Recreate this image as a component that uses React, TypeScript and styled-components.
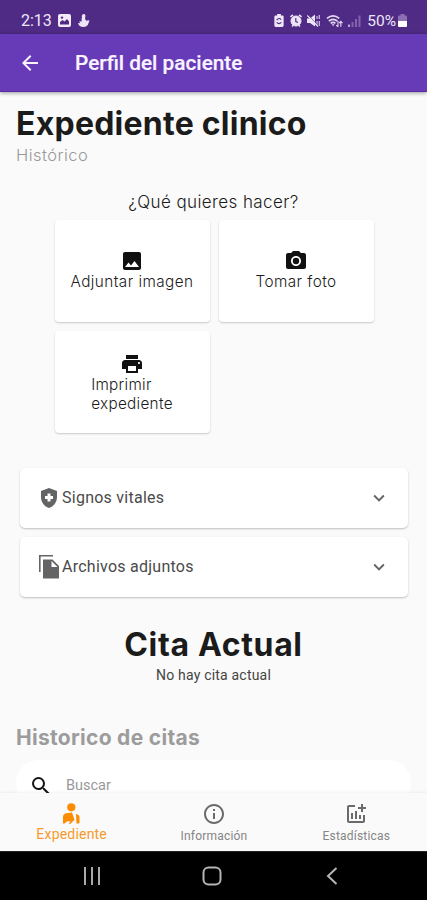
import React from "react";
import styled, { createGlobalStyle } from "styled-components";
import {
  MdAddchart,
  MdArrowBack,
  MdCameraAlt,
  MdExpandMore,
  MdHealthAndSafety,
  MdImage,
  MdInfoOutline,
  MdPrint,
  MdSearch,
} from "react-icons/md";

const GlobalStyle = createGlobalStyle`
  * { box-sizing: border-box; }
  body { margin: 0; background: #fafafa; }
  svg { display: block; flex: none; }
`;

const geometric = `Inter, "Open Sans", sans-serif`;
const roboto = `Roboto, "Liberation Sans", sans-serif`;

const Screen = styled.div`
  width: 427px;
  height: 900px;
  display: flex;
  flex-direction: column;
  overflow: hidden;
  background: #fafafa;
  color: #1b1b1b;
  font-family: ${roboto};
`;

const StatusBar = styled.div`
  height: 34px;
  flex: none;
  padding: 7px 20px 0 21px;
  display: flex;
  justify-content: space-between;
  background: #4f2b86;
  color: #eee6f8;
  font-size: 16px;
`;

const StatusGroup = styled.div<{ $gap: number }>`
  height: 27px;
  display: flex;
  align-items: center;
  gap: ${(p) => p.$gap}px;
`;

const BatteryText = styled.span`
  font-size: 15.5px;
`;

const AppBar = styled.header`
  height: 58px;
  flex: none;
  display: flex;
  align-items: center;
  padding: 0 18px 0 18px;
  gap: 33px;
  background: #673ab7;
  border-bottom: 1px solid #5a2ba5;
  box-shadow: 0 1px 4px rgba(0, 0, 0, 0.4);
  color: #f8f3ff;
  z-index: 1;
`;

const BarTitle = styled.h1`
  margin: 0;
  padding-top: 1px;
  font-size: 20.8px;
  font-weight: 500;
  line-height: 24px;
  -webkit-text-stroke: 0.2px currentColor;
`;

const Content = styled.main`
  flex: 1;
  min-height: 0;
  overflow: hidden;
  display: flex;
  flex-direction: column;
`;

const Text = styled.div<{
  $size: number;
  $line: number;
  $weight?: number;
  $color?: string;
  $spacing?: number;
  $font?: string;
}>`
  margin: 0;
  font-family: ${(p) => p.$font ?? geometric};
  font-size: ${(p) => p.$size}px;
  line-height: ${(p) => p.$line}px;
  font-weight: ${(p) => p.$weight ?? 400};
  color: ${(p) => p.$color ?? "#1b1b1b"};
  letter-spacing: ${(p) => p.$spacing ?? 0}px;
  white-space: pre-line;
`;

const Heading = styled.section`
  height: 98px;
  flex: none;
  padding: 12px 16px 0;
`;

const Question = styled.div`
  height: 28px;
  flex: none;
  display: flex;
  justify-content: center;
`;

const ActionGrid = styled.div`
  display: grid;
  flex: none;
  grid-template-columns: 155px 155px;
  grid-auto-rows: 102px;
  gap: 9px;
  padding: 2px 0 0 54.5px;
`;

const ActionCard = styled.button<{ $tall?: boolean }>`
  border: 0;
  padding: ${(p) => (p.$tall ? "1px 0 0" : "0 0 3px")};
  display: flex;
  flex-direction: column;
  align-items: center;
  justify-content: center;
  text-align: left;
  background: #fff;
  border-radius: 4px;
  box-shadow: 0 1px 2px rgba(0, 0, 0, 0.2);
  color: #111;
`;

const ActionLabel = styled(Text)`
  margin-top: -1px;
`;

const Panels = styled.div`
  flex: none;
  display: grid;
  grid-auto-rows: 60px;
  gap: 9px;
  padding: 35px 19px 0 20px;
`;

const Panel = styled.div`
  display: flex;
  align-items: center;
  padding: 0 18px 1px 16px;
  background: #fff;
  border-radius: 5px;
  box-shadow: 0 1px 2px rgba(0, 0, 0, 0.24);
  color: #646464;
`;

const PanelIcon = styled.span`
  width: 26px;
  display: flex;
  justify-content: center;
`;

const PanelLabel = styled.span`
  flex: 1;
  font-size: 16px;
  letter-spacing: 0.25px;
  color: #4a4a4a;
`;

const Current = styled.section`
  flex: none;
  height: 123px;
  padding-top: 28px;
  display: flex;
  flex-direction: column;
  align-items: center;
`;

const History = styled.section`
  flex: none;
  padding: 4px 16px 0;
`;

const SearchBox = styled.div`
  height: 46px;
  margin-top: 8px;
  padding: 5px 12px 0 13px;
  display: flex;
  align-items: center;
  gap: 13px;
  background: #fff;
  border-radius: 23px;
  color: #151515;
`;

const TabBar = styled.nav`
  height: 58px;
  flex: none;
  display: grid;
  grid-template-columns: repeat(3, 1fr);
  background: #fafafa;
  box-shadow: 0 -1px 3px rgba(0, 0, 0, 0.05);
  z-index: 1;
`;

const Tab = styled.div<{ $active?: boolean }>`
  display: flex;
  flex-direction: column;
  align-items: center;
  padding: ${(p) => (p.$active ? "10px 0 0 1px" : "9px 0 0 1px")};
  gap: ${(p) => (p.$active ? 0 : 3)}px;
  color: ${(p) => (p.$active ? "#fb8c00" : "#6a6a6a")};
`;

const SystemBar = styled.div`
  height: 49px;
  flex: none;
  display: grid;
  grid-template-columns: repeat(3, 120px);
  justify-content: center;
  align-items: center;
  justify-items: center;
  padding-right: 3px;
  background: #000;
  border-top: 1px solid #222;
`;

function ThumbnailIcon() {
  return (
    <svg width="13" height="13" viewBox="0 0 13 13">
      <rect width="13" height="13" rx="2" fill="#f2eafa" />
      <path d="M2 10.5V8l2.5-2 2 1.6L9 5l2 2.5v3z" fill="#4f2b86" />
      <circle cx="4" cy="3.6" r="1.2" fill="#4f2b86" />
    </svg>
  );
}

function FigureIcon() {
  return (
    <svg width="12" height="13" viewBox="0 0 12 13" fill="#eee6f8">
      <path d="M5.500 0c1.800 0 2.300 1.400 1.800 2.800L7 4.500l1 2.300 3.500-.5-1 3C9.800 12 8 13 5.500 13 2.500 13 .6 11.500 0 9l2.200.2-1-2 2.600.3L3.500 5 4 3.800Q3.200 1 5.500 0z" />
    </svg>
  );
}

function BatteryCareIcon() {
  return (
    <svg width="10" height="13" viewBox="0 0 10 14">
      <path d="M3 0h4v1.500h1.500Q10 1.500 10 3v9.500Q10 14 8.500 14h-7Q0 14 0 12.500V3Q0 1.500 1.500 1.500H3z" fill="#eee6f8" />
      <path d="M2.500 6.500Q5 3.500 7.300 6M2.500 9q2.500 2.800 5 0" fill="none" stroke="#4f2b86" strokeWidth="1.200" />
    </svg>
  );
}

function AlarmIcon() {
  return (
    <svg width="12" height="13" viewBox="0 0 12 13" fill="none" stroke="#4f2b86">
      <circle cx="6" cy="7" r="5" fill="#eee6f8" stroke="#eee6f8" />
      <path d="M.5 3 3 .8M11.500 3 9 .8M2 12.500l1.200-1.200M10 12.500l-1.200-1.200" stroke="#eee6f8" strokeWidth="1.600" />
      <path d="M5.800 4v3.500l2.200 1" strokeWidth="1.200" />
    </svg>
  );
}

function MutedIcon() {
  return (
    <svg width="13" height="13" viewBox="0 0 13 13">
      <path d="M0 4.500h3L8 .5v12L3 9H0z" fill="#eee6f8" />
      <path d="M10 2v3M10 7v4M12.300 1v4M12.300 7v5" stroke="#c9b7e2" strokeWidth="1.300" />
      <path d="M1.200 1l11 11.500" stroke="#4f2b86" strokeWidth="0.700" />
      <path d="M.3 1.500 11 12.500" stroke="#eee6f8" strokeWidth="1.200" />
    </svg>
  );
}

function WifiIcon() {
  return (
    <svg width="17" height="14" viewBox="0 0 18 14" fill="none" stroke="#e4d9f2" strokeWidth="1.700">
      <path d="M1 4.200Q7.500-1.200 14 4.200M3 7q4.500-3.600 9 0M5 9.500q2.500-2 5 0" />
      <path d="M7.500 12.500 6 10.500h3z" fill="#e4d9f2" stroke="none" />
      <path d="M12.700 7v6m-1.800-1.700 1.800 1.900M15.700 13V7.500M14 9.200l1.700-1.800 1.700 1.800" strokeWidth="1.200" />
    </svg>
  );
}

function SignalIcon() {
  return (
    <svg width="13" height="12" viewBox="0 0 13 12">
      <path d="M0 9.500h2V12H0z" fill="#b9a4d6" />
      <path d="M3.500 7h2v5h-2zM7 4h2v8H7zM10.500 0.500h2V12h-2z" fill="#8363ad" />
    </svg>
  );
}

function BatteryIcon() {
  return (
    <svg width="9" height="13" viewBox="0 0 9 13">
      <path d="M2.500 0h4v1.500H8q1 0 1 1V7H0V2.500q0-1 1-1h1.500z" fill="#8c70b2" />
      <path d="M0 7h9v5q0 1-1 1H1q-1 0-1-1z" fill="#fff" />
    </svg>
  );
}

function FilesIcon() {
  return (
    <svg width="22" height="24" viewBox="0 0 22 24" fill="#646464">
      <path d="M1 0h14v1.600H2.600V17H1z" />
      <path d="M5 4.500h9.500L21 11v12.500H5zM13.500 6v6h6z" fillRule="evenodd" />
    </svg>
  );
}

function PatientIcon() {
  return (
    <svg width="17" height="22" viewBox="0 0 17 22" fill="#fb8c00">
      <circle cx="8.300" cy="4.300" r="4.100" />
      <path d="M0 20.500V14q0-3.300 3.300-3.800L9 9.500l2.500 7.200-4.300 4.300H5.800l1.700-2.700H4.300L1.500 20.500z" />
      <path d="M13 11q3.500.5 3.500 3.500v5q0 1-1 1h-2z" />
    </svg>
  );
}

export default function App() {
  return (
    <>
      <GlobalStyle />
      <Screen>
        <StatusBar>
          <StatusGroup $gap={6.5}>
            <span>2:13</span>
            <ThumbnailIcon />
            <FigureIcon />
          </StatusGroup>
          <StatusGroup $gap={5.5}>
            <BatteryCareIcon />
            <AlarmIcon />
            <MutedIcon />
            <WifiIcon />
            <StatusGroup $gap={6}>
              <SignalIcon />
              <StatusGroup $gap={2}>
                <BatteryText>50%</BatteryText>
                <BatteryIcon />
              </StatusGroup>
            </StatusGroup>
          </StatusGroup>
        </StatusBar>
        <AppBar>
          <MdArrowBack size={24} />
          <BarTitle>Perfil del paciente</BarTitle>
        </AppBar>
        <Content>
          <Heading>
            <Text as="h2" $size={32} $line={40} $weight={700} $spacing={0.24}>
              Expediente clinico
            </Text>
            <Text $size={16.5} $line={22} $weight={300} $color="#999" $spacing={0.45}>
              Histórico
            </Text>
          </Heading>
          <Question>
            <Text $size={17} $line={24} $weight={300} $spacing={0.4}>
              ¿Qué quieres hacer?
            </Text>
          </Question>
          <ActionGrid>
            <ActionCard>
              <MdImage size={24} />
              <ActionLabel $size={15.3} $line={19} $weight={300} $spacing={0.45}>
                Adjuntar imagen
              </ActionLabel>
            </ActionCard>
            <ActionCard>
              <MdCameraAlt size={24} />
              <ActionLabel $size={15.3} $line={19} $weight={300} $spacing={0.45}>
                Tomar foto
              </ActionLabel>
            </ActionCard>
            <ActionCard $tall>
              <MdPrint size={24} />
              <ActionLabel $size={15.3} $line={19} $weight={300} $spacing={0.3}>
                {"Imprimir\nexpediente"}
              </ActionLabel>
            </ActionCard>
          </ActionGrid>
          <Panels>
            <Panel>
              <PanelIcon>
                <MdHealthAndSafety size={24} />
              </PanelIcon>
              <PanelLabel>Signos vitales</PanelLabel>
              <MdExpandMore size={22} />
            </Panel>
            <Panel>
              <PanelIcon>
                <FilesIcon />
              </PanelIcon>
              <PanelLabel>Archivos adjuntos</PanelLabel>
              <MdExpandMore size={22} />
            </Panel>
          </Panels>
          <Current>
            <Text as="h2" $size={32} $line={40} $weight={700} $spacing={0.65}>
              Cita Actual
            </Text>
            <Text $size={14} $line={20} $color="#444" $font={roboto} $spacing={0.2}>
              No hay cita actual
            </Text>
          </Current>
          <History>
            <Text as="h3" $size={21} $line={28} $weight={700} $color="#9c9c9c" $spacing={0.3}>
              Historico de citas
            </Text>
            <SearchBox>
              <MdSearch size={24} />
              <Text $size={14.5} $line={20} $color="#999" $font={roboto}>
                Buscar
              </Text>
            </SearchBox>
          </History>
        </Content>
        <TabBar>
          <Tab $active>
            <PatientIcon />
            <Text $size={14} $line={18} $color="#f79a2b" $font={roboto} $spacing={0.2}>
              Expediente
            </Text>
          </Tab>
          <Tab>
            <MdInfoOutline size={24} />
            <Text $size={12} $line={15} $color="#858585" $font={roboto} $spacing={0.2}>
              Información
            </Text>
          </Tab>
          <Tab>
            <MdAddchart size={24} />
            <Text $size={12} $line={15} $color="#858585" $font={roboto} $spacing={0.2}>
              Estadísticas
            </Text>
          </Tab>
        </TabBar>
        <SystemBar>
          <svg width="18" height="18" viewBox="0 0 18 18" stroke="#aaa" strokeWidth="2">
            <path d="M2 0v18M9 0v18M16 0v18" />
          </svg>
          <svg width="20" height="20" viewBox="0 0 20 20" fill="none" stroke="#b5b5b5" strokeWidth="2">
            <rect x="1.500" y="1.500" width="17" height="17" rx="5" />
          </svg>
          <svg width="12" height="18" viewBox="0 0 12 18" fill="none" stroke="#b5b5b5" strokeWidth="2">
            <path d="M10.500 1 2 9l8.500 8" />
          </svg>
        </SystemBar>
      </Screen>
    </>
  );
}
